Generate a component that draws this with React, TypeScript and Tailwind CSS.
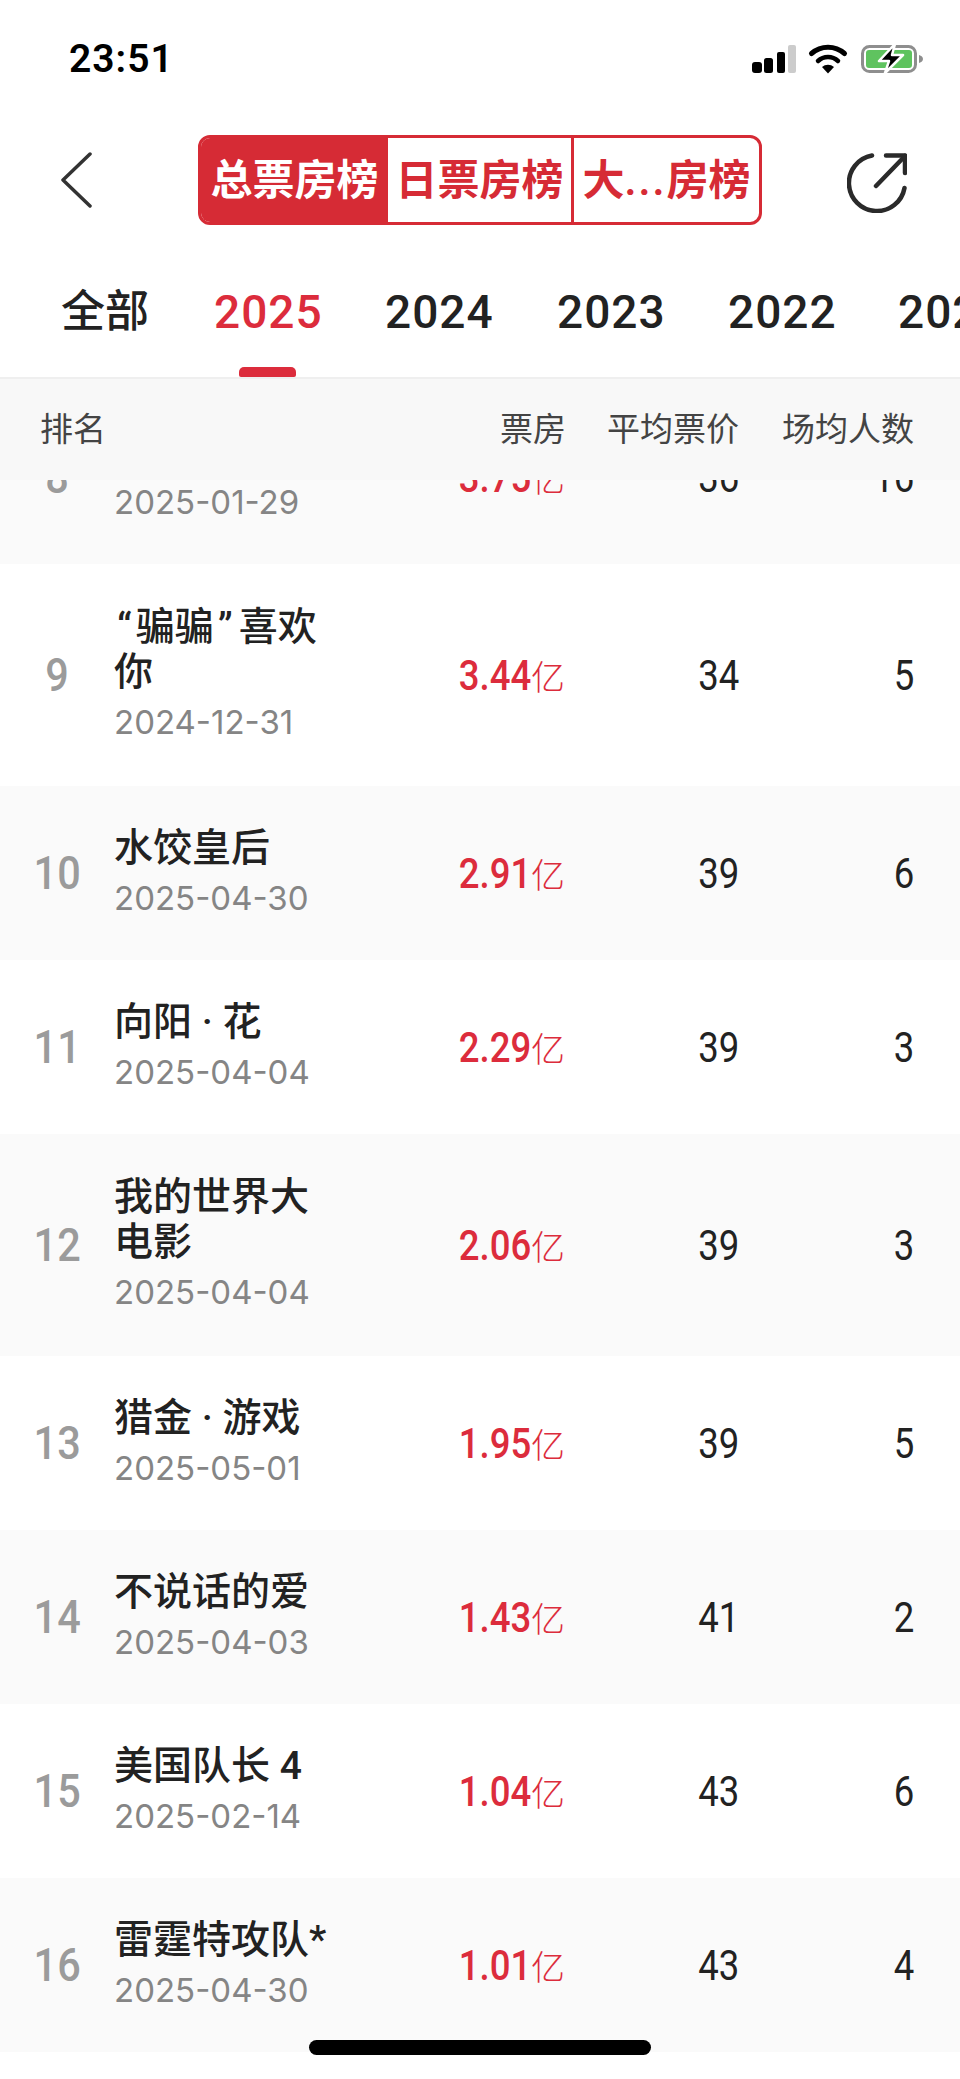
import type { ReactNode } from "react";

const cjk = "font-['Roboto','Noto_Sans_CJK_SC',sans-serif]";

type Row = { rank: number; title: ReactNode[]; date: string; box: string; avg: number; per: number; cut?: boolean };

const rows: Row[] = [
  { rank: 8, title: ["蛟龙行动"], date: "2025-01-29", box: "3.75", avg: 36, per: 16, cut: true },
  {
    rank: 9,
    title: [
      <>
        <span className="ml-[3px] mr-[4px]">“</span>骗骗<span className="ml-[4px] mr-[6px]">”</span>喜欢
      </>,
      "你",
    ],
    date: "2024-12-31",
    box: "3.44",
    avg: 34,
    per: 5,
  },
  { rank: 10, title: ["水饺皇后"], date: "2025-04-30", box: "2.91", avg: 39, per: 6 },
  { rank: 11, title: ["向阳 · 花"], date: "2025-04-04", box: "2.29", avg: 39, per: 3 },
  { rank: 12, title: ["我的世界大", "电影"], date: "2025-04-04", box: "2.06", avg: 39, per: 3 },
  { rank: 13, title: ["猎金 · 游戏"], date: "2025-05-01", box: "1.95", avg: 39, per: 5 },
  { rank: 14, title: ["不说话的爱"], date: "2025-04-03", box: "1.43", avg: 41, per: 2 },
  { rank: 15, title: ["美国队长 4"], date: "2025-02-14", box: "1.04", avg: 43, per: 6 },
  { rank: 16, title: ["雷霆特攻队*"], date: "2025-04-30", box: "1.01", avg: 43, per: 4 },
];

function StatusIcons() {
  return (
    <svg width="172" height="30" viewBox="0 0 172 30" className="block">
      <rect x="0" y="18" width="10" height="11" rx="3" fill="#000" />
      <rect x="12" y="14" width="9" height="15" rx="2.5" fill="#000" />
      <rect x="25" y="8" width="8" height="21" rx="2" fill="#000" />
      <rect x="36" y="1" width="8" height="28" rx="2" fill="#ccc" />
      <path d="M59.5 9.5a25 25 0 0 1 33 0" fill="none" stroke="#000" strokeWidth="5" strokeLinecap="round" />
      <path d="M66 17a14.500 14.500 0 0 1 20 0" fill="none" stroke="#000" strokeWidth="4.500" strokeLinecap="round" />
      <path d="M70 23a9 9 0 0 1 12 0l-6 6.500z" fill="#000" />
      <rect x="110.500" y="2.500" width="53" height="25" rx="7" fill="none" stroke="#8e8e8e" strokeWidth="3" />
      <rect x="114" y="6" width="46" height="18" rx="3" fill="#5fc35f" />
      <path d="M167 11c2.500 .6 4 2.300 4 4s-1.500 3.400-4 4z" fill="#8e8e8e" />
      <path d="M143 0 L127 17 H137 L133 29 L151 11 H140 Z" fill="#000" stroke="#fff" strokeWidth="2.500" strokeLinejoin="round" />
    </svg>
  );
}

function TableRow({ r, i }: { r: Row; i: number }) {
  const two = r.title.length > 1;
  return (
    <div
      className={`flex items-center pr-[46px] ${i % 2 === 0 ? "bg-[#fafafa]" : "bg-white"} ${two ? "h-[222px]" : "h-[174px]"} ${r.cut ? "-mt-[90px]" : ""}`}
    >
      <div className="w-[114px] shrink-0 text-center text-[46px] leading-none text-[#9b9b9b] font-medium">
        <span className="inline-block scale-x-[0.9]">{r.rank}</span>
      </div>
      <div className="flex-1 min-w-0">
        {r.title.map((t, k) => (
          <div key={k} className="text-[39px] leading-[45px] font-medium text-[#222] whitespace-nowrap">
            {t}
          </div>
        ))}
        <div className="mt-[4px] font-['Inter',sans-serif] text-[33px] leading-[46px] text-[#858585]">{r.date}</div>
      </div>
      <div className="w-[160px] shrink-0 text-right text-[#dc2c3c] whitespace-nowrap leading-none">
        <span className="inline-block origin-right scale-x-[0.85] text-[43px] font-medium">{r.box}</span>
        <span className="text-[34px] font-extralight">亿</span>
      </div>
      <div className="w-[174px] shrink-0 text-right text-[#222] leading-none">
        <span className="inline-block origin-right scale-x-[0.85] text-[43px]">{r.avg}</span>
      </div>
      <div className="w-[175px] shrink-0 text-right text-[#222] leading-none">
        <span className="inline-block origin-right scale-x-[0.85] text-[43px]">{r.per}</span>
      </div>
    </div>
  );
}

export default function App() {
  return (
    <div className={`relative w-[960px] h-[2079px] overflow-hidden bg-white flex flex-col ${cjk}`}>
      <div className="h-[120px] shrink-0 flex items-start justify-between pl-[69px] pr-[36px] pt-[37px]">
        <div className="text-[39px] leading-[44px] font-semibold text-black tracking-[1px]">23:51</div>
        <div className="mt-[7px]">
          <StatusIcons />
        </div>
      </div>

      <div className="h-[120px] shrink-0 flex items-center pl-[61px]">
        <svg width="31" height="56" viewBox="0 0 31 56" fill="none" className="shrink-0">
          <path d="M29 2 L2 28 L29 54" stroke="#333" strokeWidth="3.500" strokeLinecap="round" strokeLinejoin="round" />
        </svg>
        <div className="ml-[106px] w-[564px] h-[90px] shrink-0 flex rounded-[12px] border-[3px] border-[#d62b35] overflow-hidden text-[42px] font-semibold">
          <div className="w-[187px] flex items-center justify-center bg-[#d62b35] text-white">总票房榜</div>
          <div className="w-[186px] flex items-center justify-center border-r-[3px] border-[#d62b35] text-[#d62b35]">日票房榜</div>
          <div className="flex-1 flex items-center justify-center text-[#d62b35] whitespace-nowrap">
            大<span className="tracking-[2px]">...</span>房榜
          </div>
        </div>
        <svg width="60" height="60" viewBox="0 0 60 60" fill="none" stroke="#2a2a2a" strokeWidth="4.500" strokeLinecap="round" strokeLinejoin="round" className="ml-[85px] mt-[5px] shrink-0">
          <path d="M25 2.500 A28 28 0 1 0 57.500 35" />
          <path d="M29 33 L58 3" />
          <path d="M39 2.500 H58 V20" />
        </svg>
      </div>

      <div className="h-[139px] shrink-0 flex items-start pl-[61px] pt-[45px] border-b-[2px] border-[#efefef] overflow-hidden whitespace-nowrap text-[46px] leading-[54px] font-medium tracking-[1px] text-[#222]">
        <div className="w-[153px] shrink-0 text-[44px] tracking-normal">全部</div>
        <div className="w-[171px] shrink-0 relative text-[#dc2c3c]">
          2025
          <div className="absolute left-[25px] top-[82px] w-[57px] h-[10px] rounded-t-[5px] rounded-b-[2px] bg-[#dc2c3c]" />
        </div>
        <div className="w-[172px] shrink-0">2024</div>
        <div className="w-[171px] shrink-0">2023</div>
        <div className="w-[170px] shrink-0">2022</div>
        <div className="shrink-0">2021</div>
      </div>

      <div className="h-[101px] shrink-0 relative z-10 flex items-center pl-[40px] pr-[46px] bg-[#f8f8f8] text-[33px] text-[#444]">
        <div className="flex-1">排名</div>
        <div className="w-[160px] text-right">票房</div>
        <div className="w-[173px] text-right">平均票价</div>
        <div className="w-[175px] text-right">场均人数</div>
      </div>

      <div className="flex-1 min-h-0 overflow-hidden relative">
        {rows.map((r, i) => (
          <TableRow key={r.rank} r={r} i={i} />
        ))}
      </div>

      <div className="absolute left-[309px] top-[2040px] w-[342px] h-[15px] rounded-full bg-black" />
    </div>
  );
}
